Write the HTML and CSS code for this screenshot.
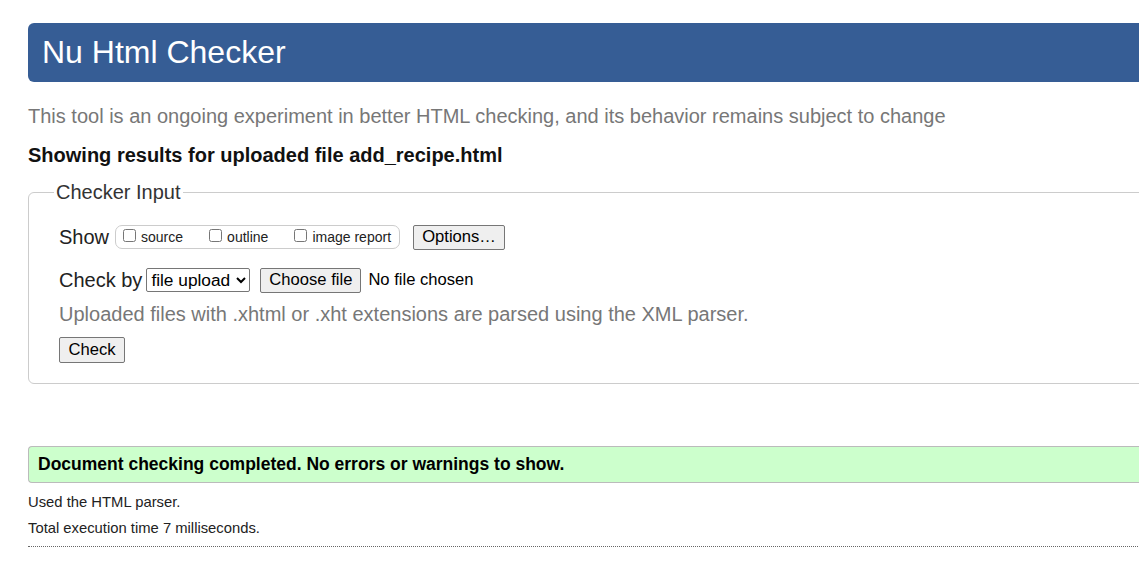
FILE: index.html
```html
<!DOCTYPE html>
<html lang="en">
<head>
<meta charset="utf-8">
<title>Nu Html Checker</title>
<link rel="stylesheet" href="styles.css">
</head>
<body>
<div class="page">
  <h1 class="banner">Nu Html Checker</h1>
  <p class="intro">This tool is an ongoing experiment in better HTML checking, and its behavior remains subject to change</p>
  <p class="showing">Showing results for uploaded file add_recipe.html</p>
  <fieldset class="input">
    <legend class="legend">Checker Input</legend>
    <div class="row show-row">
      <span class="label">Show</span>
      <span class="group">
        <label class="opt"><input type="checkbox" class="cb">source</label>
        <label class="opt"><input type="checkbox" class="cb">outline</label>
        <label class="opt"><input type="checkbox" class="cb">image report</label>
      </span>
      <button class="btn options" type="button">Options…</button>
    </div>
    <div class="row by-row">
      <span class="label">Check by</span>
      <select class="sel"><option>file upload</option></select>
      <button class="btn choose" type="button">Choose file</button>
      <span class="nofile">No file chosen</span>
    </div>
    <p class="note">Uploaded files with .xhtml or .xht extensions are parsed using the XML parser.</p>
    <button class="btn check" type="button">Check</button>
  </fieldset>
  <p class="success">Document checking completed. No errors or warnings to show.</p>
  <p class="stat">Used the HTML parser.</p>
  <p class="stat">Total execution time 7 milliseconds.</p>
  <hr class="rule">
</div>
</body>
</html>
```
FILE: styles.css
```css
html, body {
  margin: 0;
  padding: 0;
  overflow: hidden;
  background: #fff;
}
body {
  font-family: "Liberation Sans", Arial, sans-serif;
  color: #222;
}
.page {
  width: 1200px;
  padding: 23px 0 0 28px;
}
.banner {
  margin: 0;
  height: 59px;
  line-height: 59px;
  background: #365d95;
  color: #fff;
  font-size: 32px;
  font-weight: normal;
  padding-left: 14px;
  border-radius: 6px 0 0 6px;
}
.intro {
  margin: 22px 0 0;
  font-size: 20px;
  line-height: 24px;
  color: #777;
}
.showing {
  margin: 15px 0 0;
  font-size: 20px;
  line-height: 24px;
  font-weight: bold;
  color: #111;
}
.input {
  margin: 14px 0 0;
  border: 1px solid #ccc;
  border-radius: 6px 0 0 6px;
  padding: 19px 0 20px 30px;
}
.legend {
  font-size: 20px;
  color: #333;
  padding: 0 2px;
  margin-left: -5px;
}
.row {
  display: flex;
  align-items: center;
}
.label {
  font-size: 20px;
  color: #222;
}
.show-row {
  height: 28px;
}
.group {
  display: inline-flex;
  align-items: center;
  margin-left: 6px;
  height: 22px;
  border: 1px solid #ccc;
  border-radius: 7px;
  padding: 0 8px 0 7px;
  width: 268px;
  justify-content: space-between;
}
.opt {
  display: inline-flex;
  align-items: center;
  font-size: 14px;
  color: #222;
}
.cb {
  margin: 0 5px 4px 0;
  width: 13px;
  height: 13px;
}
.btn {
  font-family: "Liberation Sans", Arial, sans-serif;
  font-size: 16.6px;
  color: #000;
  background: #efefef;
  border: 1px solid #767676;
  border-radius: 2px;
  padding: 0;
  height: 25px;
  text-align: center;
}
.options {
  margin-left: 13px;
  width: 92px;
}
.by-row {
  margin-top: 15px;
  height: 28px;
}
.sel {
  font-family: "Liberation Sans", Arial, sans-serif;
  font-size: 17.3px;
  color: #000;
  margin-left: 4px;
  width: 104px;
  height: 24px;
  border: 1px solid #767676;
  border-radius: 2px;
  background: #fff;
}
.choose {
  margin-left: 10px;
  width: 101px;
}
.nofile {
  font-size: 16.6px;
  margin-left: 7px;
  color: #000;
}
.note {
  margin: 8px 0 0;
  font-size: 20px;
  line-height: 24px;
  color: #777;
}
.check {
  margin-top: 11px;
  height: 26px;
  width: 66px;
}
.success {
  margin: 62px 0 0;
  background: #ccffcc;
  border: 1px solid #bbb;
  border-right: none;
  border-radius: 4px 0 0 4px;
  padding: 0 0 0 9px;
  height: 35px;
  line-height: 35px;
  font-size: 17.5px;
  font-weight: bold;
  color: #000;
}
.stat {
  margin: 11px 0 0;
  font-size: 14.8px;
  line-height: 17px;
  color: #222;
}
.stat + .stat {
  margin-top: 9px;
}
.rule {
  margin: 9px 0 0;
  border: none;
  border-top: 1px dotted #666;
}
```
